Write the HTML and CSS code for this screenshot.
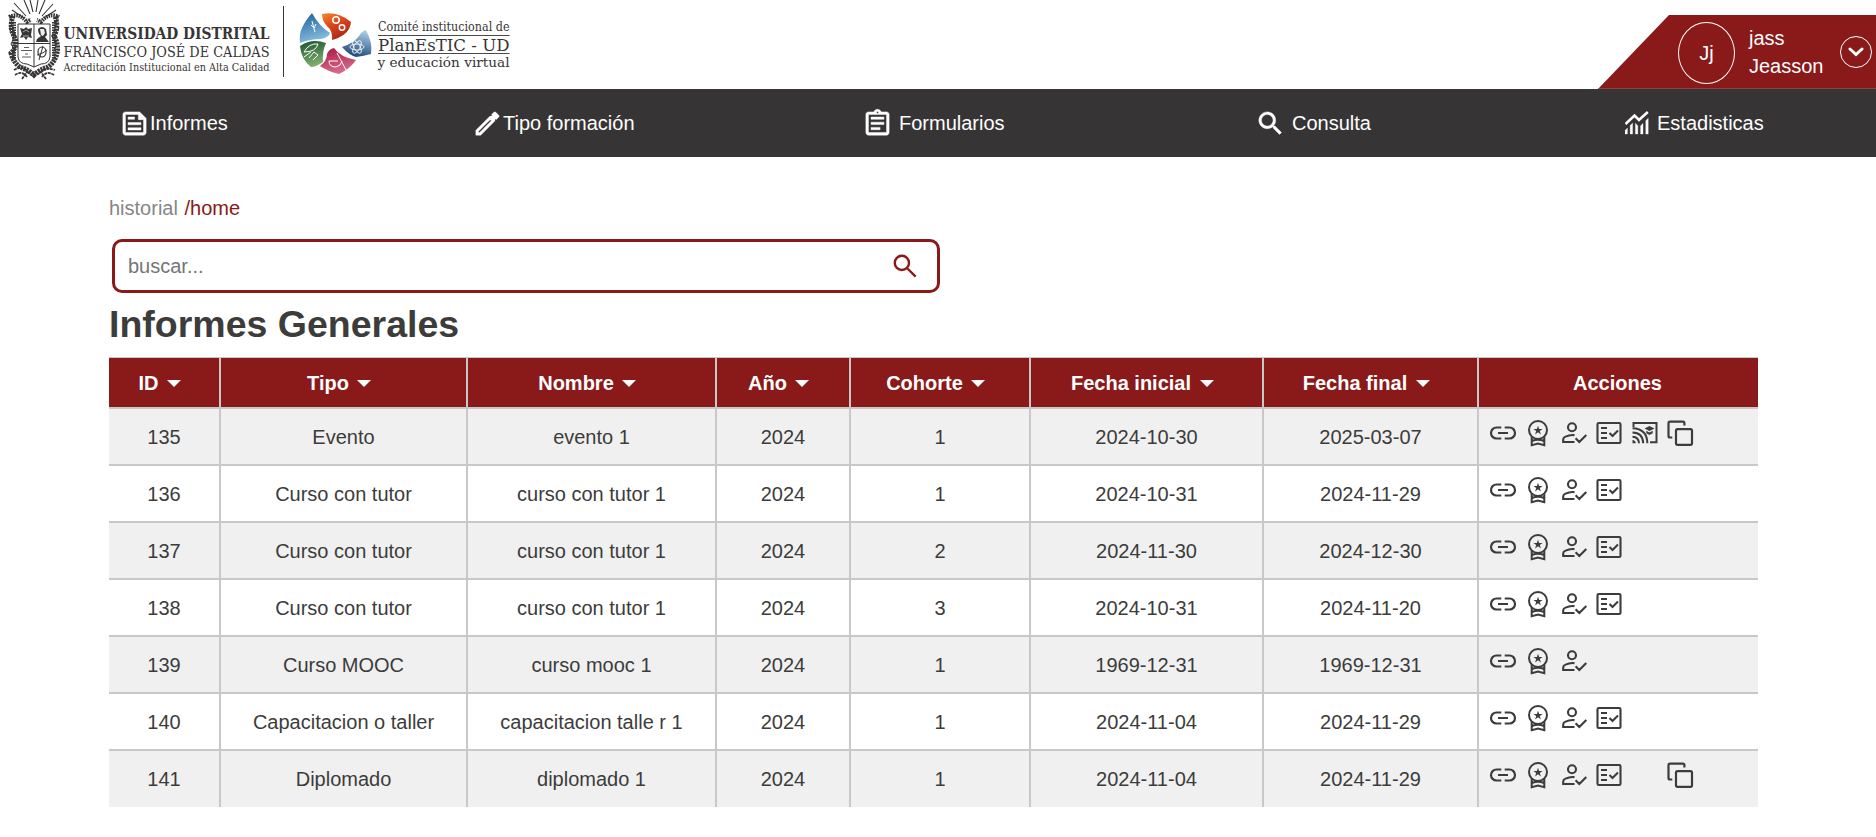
FILE: index.html
```html
<!DOCTYPE html>
<html lang="es">
<head>
<meta charset="utf-8">
<title>Informes Generales</title>
<link rel="stylesheet" href="styles.css">
</head>
<body>
<svg class="sprite" aria-hidden="true">
  <symbol id="link" viewBox="0 0 30 30"><path d="M13.300 9.500H8.500A5.300 5.300 0 0 0 8.500 20.500H13.300M16.700 9.500H21.500A5.300 5.300 0 0 1 21.500 20.500H16.700M10 15H20" fill="none" stroke="currentColor" stroke-width="2.200"/></symbol>
  <symbol id="medal" viewBox="0 0 30 30"><g fill="none" stroke="currentColor" stroke-width="2"><circle cx="15" cy="12" r="9"/><path d="M8.700 18.500V27.300L15 25.600L21.300 27.300V18.500M9 23Q15 20.500 21 23"/></g><path d="M15 7.700l1.100 3.300h3.500l-2.800 2 1.100 3.400-2.900-2.100-2.900 2.100 1.100-3.400-2.800-2h3.500z"/></symbol>
  <symbol id="person" viewBox="0 0 30 30"><g fill="none" stroke="currentColor" stroke-width="2.100"><circle cx="13" cy="9.300" r="4"/><path d="M15.500 24H4.200V21.500Q4.200 19.600 6.500 18.600Q11 16.500 15.500 17.100M16.600 20.200L20.300 24L27.300 16.900"/></g></symbol>
  <symbol id="check" viewBox="0 0 30 30"><g fill="none" stroke="currentColor" stroke-width="2.100"><rect x="3.500" y="5" width="23" height="20" rx="1.300"/><path d="M7 10H13M7 15H13M7 20H13M15.500 15L18.500 18L24 12.400"/></g></symbol>
  <symbol id="cast" viewBox="0 0 30 30"><g fill="none" stroke="currentColor" stroke-width="2"><path d="M3.500 9V5H26.500V24.200H20M2.500 14.500Q12.900 14.800 13.200 25.200M2.500 18.700Q8.700 19 9 25.200M2.500 10.300Q17 10.700 17.400 25.200"/></g><path d="M2.500 22Q5.500 22.200 5.700 25.200H2.500zM19.500 8l5 2.500-5 2.500-5-2.500zM16.300 12.800l3.200 1.600 3.200-1.600v2.500l-3.200 1.700-3.200-1.700z"/></symbol>
  <symbol id="copy" viewBox="0 0 30 30"><g fill="none" stroke="currentColor" stroke-width="2.200"><rect x="11" y="11.200" width="16" height="15.600" rx="1.600"/><path d="M7.300 19.500H5Q3.500 19.500 3.500 18V5Q3.500 3.600 5 3.600H18Q19.400 3.600 19.400 5.200V7.600"/></g></symbol>
  <symbol id="feed" viewBox="0 0 24 24"><path d="M16 3H5c-1.100 0-2 .9-2 2v14c0 1.100.9 2 2 2h14c1.100 0 2-.9 2-2V8l-5-5zm3 16H5V5h10v4h4v10zM7 17h10v-1.700H7V17zm5-10H7v1.800h5V7zm-5 6h10v-1.700H7V13z"/></symbol>
  <symbol id="pencil" viewBox="0 0 24 24"><path d="M14.060 9.020l.92.92L5.920 19H5v-.92l9.060-9.060M17.660 3c-.25 0-.51.1-.7.29l-1.830 1.830 3.750 3.750 1.830-1.830c.39-.39.39-1.020 0-1.410l-2.340-2.340c-.2-.2-.45-.29-.71-.29zm-3.600 3.190L3 17.250V21h3.750L17.810 9.940l-3.750-3.750z"/><path d="M14 7L17.500 4.200L19.800 6.600L17 10z"/></symbol>
  <symbol id="clipboard" viewBox="0 0 24 24"><path d="M7 15h7v1.800H7zm0-4h10v1.800H7zm0-4h10v1.800H7zm12-4h-4.180C14.400 1.840 13.300 1 12 1c-1.300 0-2.400.84-2.820 2H5c-1.100 0-2 .9-2 2v14c0 1.100.9 2 2 2h14c1.100 0 2-.9 2-2V5c0-1.100-.9-2-2-2zm-7-.25c.41 0 .75.340.75.750s-.340.750-.750.750-.750-.340-.750-.750.340-.750.750-.750zM19 19H5V5h14v14z"/></symbol>
  <symbol id="search" viewBox="0 0 24 24"><path d="M15.500 14h-.79l-.28-.27C15.410 12.590 16 11.110 16 9.500 16 5.910 13.090 3 9.500 3S3 5.910 3 9.500 5.910 16 9.500 16c1.610 0 3.090-.59 4.230-1.570l.27.28v.79l5 4.990L20.490 19l-4.990-5zm-6 0C7.010 14 5 11.990 5 9.500S7.010 5 9.500 5 14 7.010 14 9.500 11.990 14 9.500 14z"/></symbol>
  <symbol id="stats" viewBox="0 0 24 24"><path d="M0 19.500l2.400-2.400V23H0zM5.200 14.500l2.400-2.400V23H5.200zM10.400 12.300l2.400 2.400V23h-2.400zM15.600 14.700l2.400-2.300V23h-2.400zM20.800 9.700l2.400-2.400V23h-2.400z"/><path d="M.5 13L9.500 4.500L14 9L22.800 1" fill="none" stroke="currentColor" stroke-width="2.500"/></symbol>
</svg>

<header class="top">
  <svg class="brand" viewBox="0 0 520 88" width="520" height="88">
    <defs>
      <linearGradient id="gBlue" x2=".3" y2="1"><stop offset="0" stop-color="#1d5f9b"/><stop offset="1" stop-color="#86bbdc"/></linearGradient>
      <linearGradient id="gOrange" x2=".5" y2="1"><stop offset="0" stop-color="#f18a2b"/><stop offset=".5" stop-color="#dc431c"/><stop offset="1" stop-color="#a92b18"/></linearGradient>
      <linearGradient id="gSky" x1=".6" x2=".3" y2="1"><stop offset="0" stop-color="#a9cee3"/><stop offset="1" stop-color="#164277"/></linearGradient>
      <linearGradient id="gPink" y1="0" x2=".3" y2="1"><stop offset="0" stop-color="#a91942"/><stop offset="1" stop-color="#d7698c"/></linearGradient>
      <linearGradient id="gGreen" x2=".3" y2="1"><stop offset="0" stop-color="#18512f"/><stop offset="1" stop-color="#7dae6b"/></linearGradient>
    </defs>
    <!-- coat of arms -->
    <g class="ink-line">
      <path d="M30 14L24 0M33 12L30 0M36 12L38 0M39 14L45 0M26 16L14 3M42 16L53 4M24 18L12 10M44 18L56 10" stroke-width="1.100"/>
      <path d="M13 16Q9 27 14 36T11 53Q13 62 20 67Q29 70 34 75Q39 70 48 67Q55 62 57 53T54 36Q59 27 55 16" stroke-width="5" stroke-dasharray="2.200 .8"/>
      <path d="M9 17Q19 12 27 22Q34 17 41 22Q49 12 59 17M14 22V60M54 22V60" stroke-width="4" stroke-dasharray="1.600 .9"/>
      <path d="M10 15q4 9-1 14 8 6 2 15 6 8 1 15M58 15q-4 9 1 14-8 6-2 15-6 8-1 15" stroke-width="1"/>
      <path d="M14 70q8-5 13 1t7 4q4 0 8-4t13-1M15 75q7-5 12 2M54 75q-7-5-12 2M22 79l5-7M46 79l-5-7" stroke-width="1.800" stroke-dasharray="3 .7"/>
    </g>
    <path d="M18 24H50V57Q49 64 41 64L34 67L27 64Q19 64 18 57Z" fill="#fff" stroke="#373435" stroke-width="1"/>
    <path d="M34 24V67M18 43.500H50" stroke="#373435" stroke-width="1"/>
    <circle cx="34" cy="19" r="3.300" fill="#fff"/>
    <path d="M20 28l4 1 2-2 2 2 4-1-1 7 1 3-4-1-2 3-2-3-4 1 2-4z" fill="#373435"/>
    <path d="M23 32l3-2 3 2M23 36h6" fill="none" stroke="#ddd" stroke-width=".7"/>
    <path d="M38 29q4-4 8 0l1 6-2 2 4 5H36l1-3 4-3q-3-2-3-7z" fill="#373435"/>
    <path d="M40 29h4l1 4-2 3-2-1z" fill="#eee"/>
    <path d="M24 47.500h5M21 50.500h11M25 54h3M22 57h9" stroke="#373435" stroke-width=".8"/>
    <ellipse cx="42" cy="52" rx="4" ry="5" fill="none" stroke="#373435" stroke-width="1.200"/><path d="M37 55Q44 53 47 50M43 46L39 60" fill="none" stroke="#373435"/>
    <g class="brand-text">
      <text x="63.500" y="39" font-size="15.800" font-weight="bold" textLength="206" lengthAdjust="spacingAndGlyphs">UNIVERSIDAD DISTRITAL</text>
      <text x="63.500" y="57.300" font-size="15.400" textLength="206" lengthAdjust="spacingAndGlyphs">FRANCISCO JOSÉ DE CALDAS</text>
      <text x="63.500" y="70.700" font-size="11" textLength="206" lengthAdjust="spacingAndGlyphs">Acreditación Institucional en Alta Calidad</text>
      <text x="378" y="30.700" font-size="12" textLength="131.500" lengthAdjust="spacingAndGlyphs">Comité institucional de</text>
      <text x="378" y="50.500" font-size="17.500" textLength="131.500" lengthAdjust="spacingAndGlyphs">PlanEsTIC - UD</text>
      <text x="377.500" y="66.500" font-size="13.500" textLength="132" lengthAdjust="spacingAndGlyphs">y educación virtual</text>
    </g>
    <path d="M283.500 6V77" stroke="#373435"/>
    <path d="M378 35.500H509.500M378 53.500H509.500" stroke="#373435" stroke-width=".9"/>
    <!-- petal emblem -->
    <path d="M312 13Q319 26 330 33Q329 37 321 39Q310 39 300 43Q299 34 302 28Q305 21 312 13Z" fill="url(#gBlue)"/>
    <path d="M322 14Q338 11 351 22Q350 35 332 40Q333 31 327 26Q322 21 322 14Z" fill="url(#gOrange)"/>
    <path d="M366 30Q373 43 371 54Q364 56 356 57Q349 55 342 47Q354 43 359 36Q362 31 366 30Z" fill="url(#gSky)"/>
    <path d="M334 48Q340 57 356 60Q350 69 339 74Q327 71 320 66Q327 61 327 54Q329 49 334 48Z" fill="url(#gPink)"/>
    <path d="M300 46Q312 38 326 43Q322 52 323 62Q316 67 311 67Q301 59 300 46Z" fill="url(#gGreen)"/>
    <g fill="none" stroke="#fff" stroke-width="1">
      <path d="M315 32L312 21M314 28l-3-3M314 28l2-4"/>
      <circle cx="336" cy="20" r="3.200" stroke-width="1.500"/><circle cx="342" cy="27.500" r="2.700" stroke-width="1.500"/>
      <g stroke-width=".8"><ellipse cx="357" cy="47" rx="7" ry="3"/><ellipse cx="357" cy="47" rx="7" ry="3" transform="rotate(60 357 47)"/><ellipse cx="357" cy="47" rx="7" ry="3" transform="rotate(120 357 47)"/></g>
      <path d="M304 52q5-9 14-8-2 8-14 8M304 57l7-5M309 58l5-6 4 3-5 5M329 61q0 6 7 6 5-1 6-6M329 61h9M337 53l9 17"/>
    </g>
  </svg>
  <div class="user">
    <div class="avatar">Jj</div>
    <div class="user-name">jass<br>Jeasson</div>
    <div class="toggle"><svg viewBox="0 0 16 10" width="16" height="10"><path d="M2 2L8 7.500L14 2"/></svg></div>
  </div>
</header>

<nav class="nav">
  <a class="nav-item"><svg><use href="#feed"/></svg>Informes</a>
  <a class="nav-item"><svg><use href="#pencil"/></svg>Tipo formación</a>
  <a class="nav-item spaced"><svg><use href="#clipboard"/></svg>Formularios</a>
  <a class="nav-item spaced"><svg><use href="#search"/></svg>Consulta</a>
  <a class="nav-item stats"><svg><use href="#stats"/></svg>Estadisticas</a>
</nav>

<main class="content">
  <div class="crumbs">historial <span>/home</span></div>
  <div class="search"><input type="text" placeholder="buscar..."><svg viewBox="0 0 24 24"><path d="M14 14L20.500 20.500"/><circle cx="9.500" cy="9.500" r="5.700"/></svg></div>
  <h1 class="title">Informes Generales</h1>
  <div class="table" id="table">
    <div class="row head"><div>ID<i></i></div><div>Tipo<i></i></div><div>Nombre<i></i></div><div>Año<i></i></div><div>Cohorte<i></i></div><div>Fecha inicial<i></i></div><div>Fecha final<i></i></div><div class="last">Acciones</div></div>
  </div>
</main>
<script src="table.js"></script>
</body>
</html>
```

FILE: styles.css
```css
* { box-sizing: border-box; }
body { margin: 0; background: #fff; color: #3c3c3b; font: 20px/28px "Liberation Sans", Arial, sans-serif; overflow: hidden; }
.sprite { position: absolute; width: 0; height: 0; }
svg { fill: currentColor; flex: none; }

.top { display: flex; justify-content: space-between; align-items: flex-end; height: 89px; }
.brand { align-self: flex-start; }
.brand-text { font-family: "DejaVu Serif", serif; fill: #373435; }
.ink-line { fill: none; stroke: #373435; }
.user { display: flex; align-items: center; width: 278px; height: 74px; padding-left: 80px; background: #8a1919; border-bottom: 1px solid #8f4344; color: #fff; clip-path: polygon(71px 0, 100% 0, 100% 100%, 0 100%); }
.avatar { display: flex; align-items: center; justify-content: center; width: 57px; height: 62px; margin-top: 3px; border: 1px solid #fff; border-radius: 50%; }
.user-name { width: 75px; margin-left: 14px; margin-right: 16px; }
.toggle { display: flex; align-items: center; justify-content: center; width: 32px; height: 32px; border: 1px solid #fff; border-radius: 50%; margin-top: 1px; }
.toggle path { fill: none; stroke: #fff; stroke-width: 3; stroke-linecap: round; }

.nav { display: grid; grid-template-columns: 353px 390px 393px 370px auto; height: 68px; padding-left: 119px; background: #373435; color: #fff; }
.nav-item { display: flex; align-items: center; white-space: nowrap; }
.nav-item svg { width: 31px; height: 31px; stroke: #fff; stroke-width: .35; }
.spaced svg { margin-right: 6px; }
.stats svg { width: 24px; height: 24px; margin-right: 8px; }

.content { padding: 37px 0 0 109px; }
.crumbs { color: #868686; word-spacing: 1px; }
.crumbs span { color: #8a1919; }
.search { display: flex; align-items: center; width: 828px; height: 54px; margin: 17px 0 0 3px; padding: 0 17px 0 13px; border: 3px solid #8a1919; border-radius: 10px; color: #8a1919; }
.search input { flex: 1; padding: 0; border: 0; outline: 0; background: none; font: inherit; }
.search input::placeholder { color: #757575; opacity: 1; }
.search svg { width: 30px; height: 30px; fill: none; stroke: currentColor; stroke-width: 1.900; }
.title { margin: 9px 0 11px; font-size: 37.500px; line-height: 44px; }

.table { width: 1649px; }
.row { display: grid; grid-template-columns: 110px 247px 249px 134px 180px 233px 215px 281px; height: 57px; border-top: 2px solid #c8c8c8; }
.row > div { display: flex; align-items: center; justify-content: center; border-left: 2px solid #c8c8c8; white-space: pre; }
.row > div:first-child { border-left: 0; }
.row:nth-child(even) { background: #f0f0f0; }
.row:last-child { height: 58px; }
.head { height: 50px; border-top-width: 1px; background: #8a1919; color: #fff; font-weight: bold; }
.head i { margin: 2px 8.500px 0; border: 7px solid transparent; border-top-color: #fff; border-bottom: 0; }
.head > .last { padding-right: 2px; }
.row > .actions { align-items: flex-start; justify-content: flex-start; gap: 5.600px; padding: 9px 0 0 8.500px; }
.actions svg { width: 30px; height: 30px; }
```

FILE: table.js
```js
const rows = [
  ["135", "Evento", "evento 1", "2024", "1", "2024-10-30", "2025-03-07", "link medal person check cast copy"],
  ["136", "Curso con tutor", "curso con tutor 1", "2024", "1", "2024-10-31", "2024-11-29", "link medal person check"],
  ["137", "Curso con tutor", "curso con tutor 1", "2024", "2", "2024-11-30", "2024-12-30", "link medal person check"],
  ["138", "Curso con tutor", "curso con tutor 1", "2024", "3", "2024-10-31", "2024-11-20", "link medal person check"],
  ["139", "Curso MOOC", "curso mooc 1", "2024", "1", "1969-12-31", "1969-12-31", "link medal person"],
  ["140", "Capacitacion o taller", "capacitacion talle r 1", "2024", "1", "2024-11-04", "2024-11-29", "link medal person check"],
  ["141", "Diplomado", "diplomado 1", "2024", "1", "2024-11-04", "2024-11-29", "link medal person check none copy"]
];
const icon = name => `<svg>${name === "none" ? "" : `<use href="#${name}"/>`}</svg>`;
document.getElementById("table").insertAdjacentHTML("beforeend", rows.map(row => {
  const cells = row.slice(0, 7).map(text => `<div>${text}</div>`).join("");
  return `<div class="row">${cells}<div class="actions">${row[7].split(" ").map(icon).join("")}</div></div>`;
}).join(""));
```
